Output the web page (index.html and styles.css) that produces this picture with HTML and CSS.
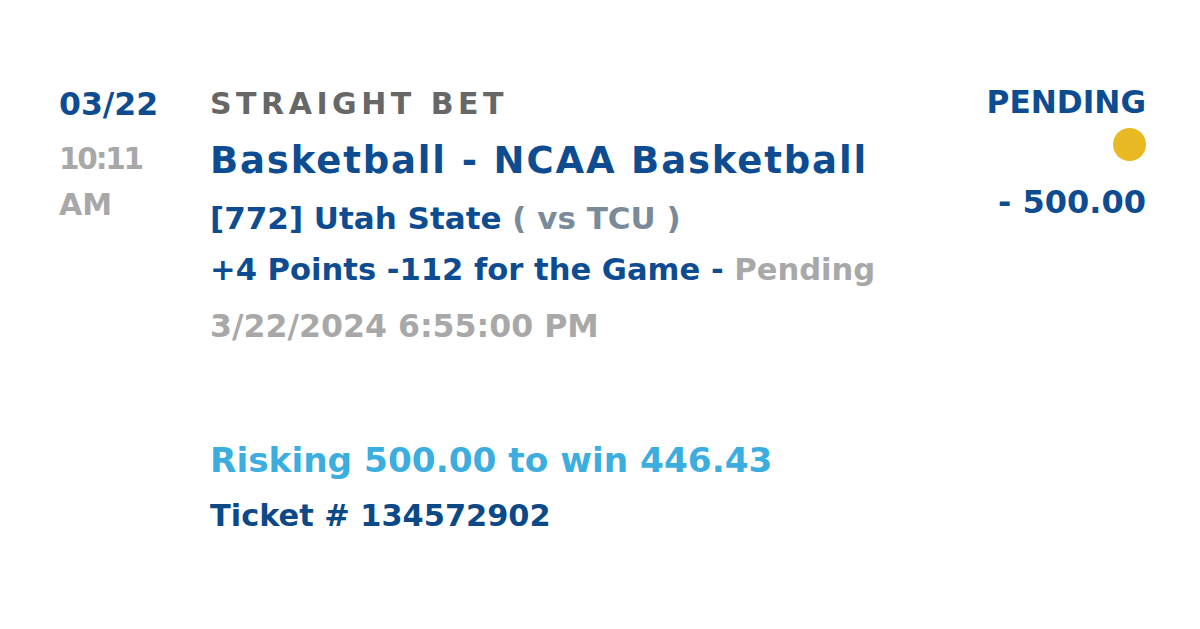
FILE: index.html
```html
<!DOCTYPE html>
<html>
<head>
<meta charset="utf-8">
<link rel="stylesheet" href="styles.css">
</head>
<body>
<div class="bet">
  <div class="when">
    <div class="date">03/22</div>
    <div class="time">
      <div class="clock">10:11</div>
      <div class="ampm">AM</div>
    </div>
  </div>
  <div class="detail">
    <div class="type">STRAIGHT BET</div>
    <div class="sport">Basketball - NCAA Basketball</div>
    <div class="team">[772] Utah State <span class="vs">( vs TCU )</span></div>
    <div class="line">+4 Points -112 for the Game - <span class="status">Pending</span></div>
    <div class="gametime">3/22/2024 6:55:00 PM</div>
    <div class="risk">Risking 500.00 to win 446.43</div>
    <div class="ticket">Ticket # 134572902</div>
  </div>
  <div class="result">
    <div class="state">PENDING</div>
    <div class="dot"></div>
    <div class="amount">- 500.00</div>
  </div>
</div>
</body>
</html>
```
FILE: styles.css
```css
html, body { margin: 0; padding: 0; background: #fff; }
body { font-family: "DejaVu Sans", "Liberation Sans", sans-serif; font-weight: 700; }
.bet { display: flex; padding: 76px 54px 0 59px; }
.when { width: 151px; flex: none; }
.date { font-size: 31.5px; line-height: 56px; color: #0e4c92; }
.time { font-size: 30px; line-height: 45px; color: #a8a8a8; margin-top: 5px; }
.clock { font-size: 29.5px; letter-spacing: -2.2px; }
.ampm { letter-spacing: 0; }
.detail { flex: 1; }
.type { font-size: 30px; line-height: 56px; color: #676767; letter-spacing: 4.5px; }
.sport { font-size: 37px; line-height: 58px; color: #0e4c92; letter-spacing: 1.85px; }
.team { font-size: 31px; line-height: 56px; color: #0e4c92; }
.vs { color: #7b8a99; }
.line { font-size: 30.6px; line-height: 48px; color: #0e4c92; }
.status { color: #a8a8a8; }
.gametime { font-size: 31.6px; line-height: 64px; color: #a8a8a8; }
.risk { font-size: 34.3px; line-height: 56px; color: #3badde; margin-top: 74px; }
.ticket { font-size: 30.4px; line-height: 56px; color: #0c4987; }
.result { display: flex; flex-direction: column; align-items: flex-end; }
.state { font-size: 31.2px; line-height: 52px; color: #0e4c92; }
.dot { width: 33px; height: 33px; border-radius: 50%; background: #e9b923; }
.amount { font-size: 32px; line-height: 56px; color: #0e4c92; margin-top: 13px; }
```
